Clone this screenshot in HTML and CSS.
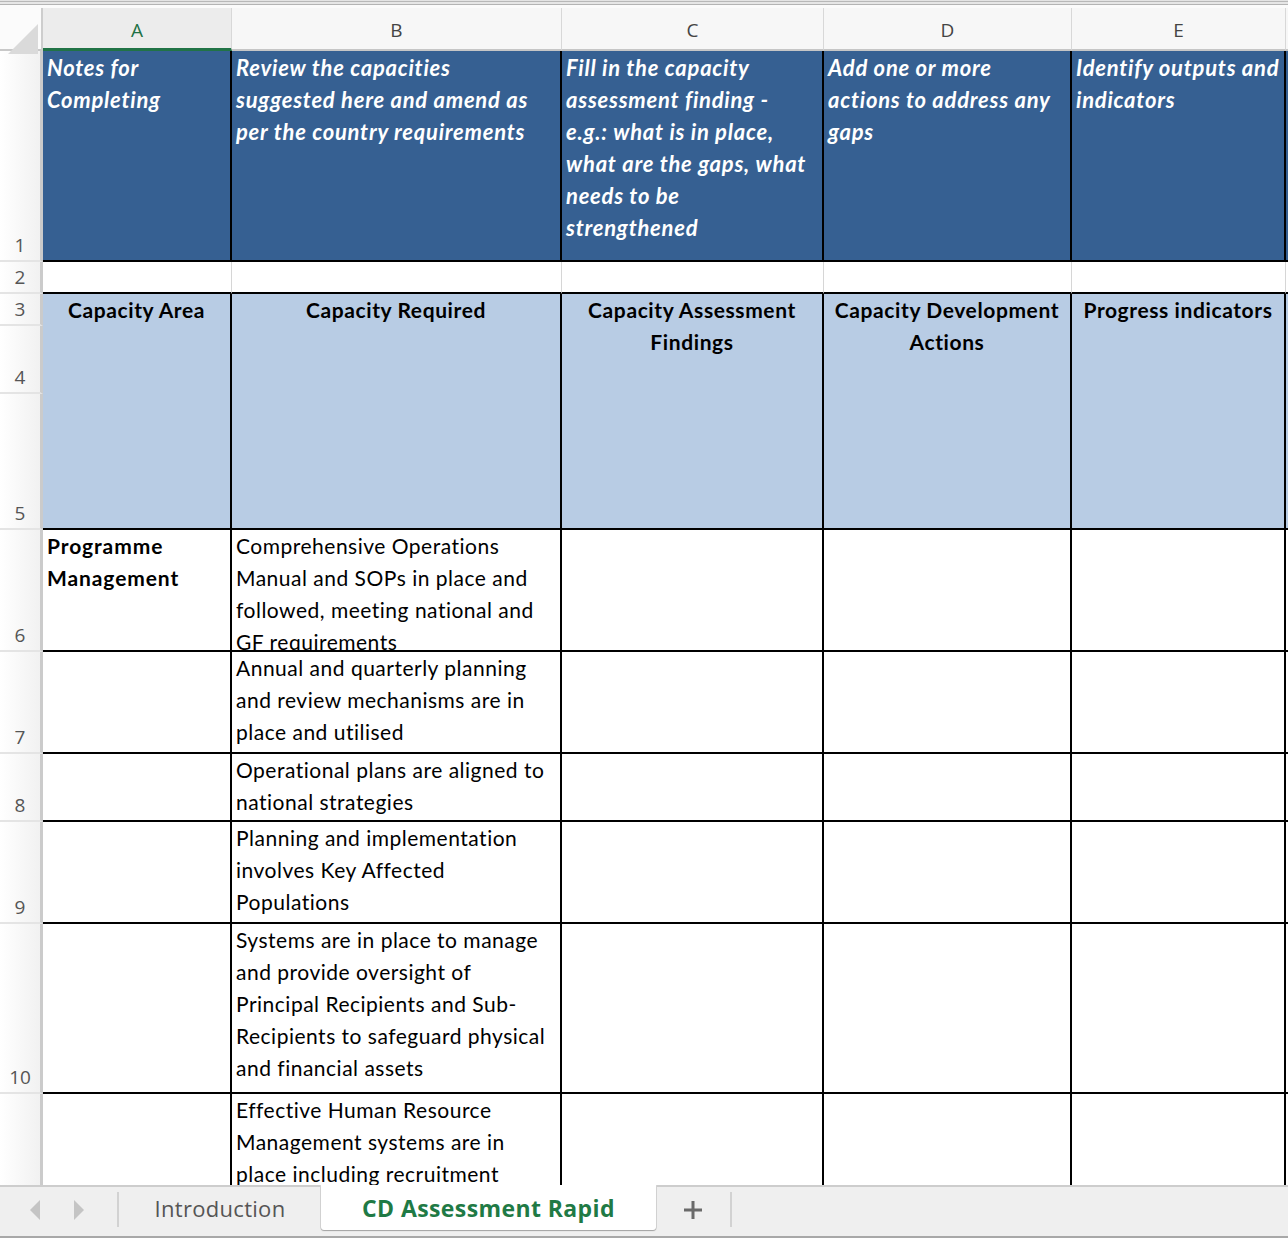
FILE: index.html
```html
<!DOCTYPE html>
<html>
<head>
<meta charset="utf-8">
<link rel="stylesheet" href="styles.css">
</head>
<body>
<div class="app">
  <div class="topbar"></div>
  <div class="sheet">
    <!-- column headers -->
    <div class="corner"><span class="tri"></span></div>
    <div class="ch ch-sel">A</div>
    <div class="ch">B</div>
    <div class="ch">C</div>
    <div class="ch">D</div>
    <div class="ch">E</div>
    <div class="ch ch-last"></div>

    <!-- row 1 -->
    <div class="rh"><span>1</span></div>
    <div class="c dark">Notes for<br>Completing</div>
    <div class="c dark">Review the capacities<br>suggested here and amend as<br>per the country requirements</div>
    <div class="c dark">Fill in the capacity<br>assessment finding -<br>e.g.: what is in place,<br>what are the gaps, what<br>needs to be<br>strengthened</div>
    <div class="c dark">Add one or more<br>actions to address any<br>gaps</div>
    <div class="c dark">Identify outputs and<br>indicators</div>
    <div class="c dark last"></div>

    <!-- row 2 -->
    <div class="rh"><span>2</span></div>
    <div class="c blank"></div>
    <div class="c blank"></div>
    <div class="c blank"></div>
    <div class="c blank"></div>
    <div class="c blank"></div>
    <div class="c blank last"></div>

    <!-- rows 3-5 -->
    <div class="rh"><span>3</span></div>
    <div class="c light span3">Capacity Area</div>
    <div class="c light span3">Capacity Required</div>
    <div class="c light span3">Capacity Assessment<br>Findings</div>
    <div class="c light span3">Capacity Development<br>Actions</div>
    <div class="c light span3">Progress indicators</div>
    <div class="c light span3 last"></div>
    <div class="rh"><span>4</span></div>
    <div class="rh"><span>5</span></div>

    <!-- row 6 -->
    <div class="rh"><span>6</span></div>
    <div class="c bold">Programme<br>Management</div>
    <div class="c">Comprehensive Operations<br>Manual and SOPs in place and<br>followed, meeting national and<br>GF requirements</div>
    <div class="c"></div>
    <div class="c"></div>
    <div class="c"></div>
    <div class="c last"></div>

    <!-- row 7 -->
    <div class="rh"><span>7</span></div>
    <div class="c"></div>
    <div class="c">Annual and quarterly planning<br>and review mechanisms are in<br>place and utilised</div>
    <div class="c"></div>
    <div class="c"></div>
    <div class="c"></div>
    <div class="c last"></div>

    <!-- row 8 -->
    <div class="rh"><span>8</span></div>
    <div class="c"></div>
    <div class="c">Operational plans are aligned to<br>national strategies</div>
    <div class="c"></div>
    <div class="c"></div>
    <div class="c"></div>
    <div class="c last"></div>

    <!-- row 9 -->
    <div class="rh"><span>9</span></div>
    <div class="c"></div>
    <div class="c">Planning and implementation<br>involves Key Affected<br>Populations</div>
    <div class="c"></div>
    <div class="c"></div>
    <div class="c"></div>
    <div class="c last"></div>

    <!-- row 10 -->
    <div class="rh"><span>10</span></div>
    <div class="c"></div>
    <div class="c">Systems are in place to manage<br>and provide oversight of<br>Principal Recipients and Sub-<br>Recipients to safeguard physical<br>and financial assets</div>
    <div class="c"></div>
    <div class="c"></div>
    <div class="c"></div>
    <div class="c last"></div>

    <!-- row 11 -->
    <div class="rh"><span></span></div>
    <div class="c"></div>
    <div class="c">Effective Human Resource<br>Management systems are in<br>place including recruitment</div>
    <div class="c"></div>
    <div class="c"></div>
    <div class="c"></div>
    <div class="c last"></div>
  </div>

  <div class="tabs">
    <div class="nav">
      <svg width="16" height="22" viewBox="0 0 16 22" class="arrow"><path d="M13 1 L3 11 L13 21 Z" fill="#c4c4c4"/></svg>
      <svg width="16" height="22" viewBox="0 0 16 22" class="arrow"><path d="M3 1 L13 11 L3 21 Z" fill="#c4c4c4"/></svg>
    </div>
    <div class="tab">Introduction</div>
    <div class="tab active">CD Assessment Rapid</div>
    <div class="add">
      <svg width="20" height="20" viewBox="0 0 20 20"><path d="M10 1 V19 M1 10 H19" stroke="#6a6a6a" stroke-width="3"/></svg>
    </div>
    <div class="tabrest"></div>
  </div>
</div>
</body>
</html>
```
FILE: styles.css
```css
html, body {
  margin: 0;
  padding: 0;
  background: #ffffff;
}
.app {
  width: 1288px;
  height: 1238px;
  overflow: hidden;
  display: flex;
  flex-direction: column;
}
.topbar {
  height: 8px;
  flex: none;
  box-sizing: border-box;
  background: #f6f6f6;
  border-top: 1px solid #e4e4e4;
  border-bottom: 3px solid #fbfbfb;
  box-shadow: inset 0 1px 0 #b8b8b8, inset 0 3px 0 #e6e6e6, inset 0 4px 0 #b4b4b4;
}
.sheet {
  height: 1177px;
  flex: none;
  overflow: hidden;
  display: grid;
  grid-template-columns: 43px 189px 330px 262px 248px 214px 1fr;
  grid-template-rows: 43px 211px 32px 32px 68px 136px 122px 102px 68px 102px 170px 120px;
  font-family: "Lato", "Open Sans", sans-serif;
  font-size: 21px;
  line-height: 32px;
  letter-spacing: 0.5px;
  color: #000;
}
.corner {
  position: relative;
  box-sizing: border-box;
  background: #fbfbfb;
  border-right: 2px solid #cdcdcd;
  border-bottom: 2px solid #c8c8c8;
}
.tri {
  position: absolute;
  left: 8px;
  top: 16px;
  width: 0;
  height: 0;
  border-left: 30px solid transparent;
  border-bottom: 30px solid #dadada;
}
.ch {
  box-sizing: border-box;
  background: #f7f7f7;
  border-right: 1px solid #d8d8d8;
  border-bottom: 2px solid #c6c6c6;
  text-align: center;
  font-family: "Open Sans", "Liberation Sans", sans-serif;
  font-size: 19px;
  line-height: 44px;
  letter-spacing: 0;
  color: #444;
}
.ch-sel {
  background: #ececec;
  color: #1e7145;
  border-bottom: 3px solid #217346;
}
.ch-last {
  border-right: none;
}
.rh {
  grid-column: 1;
  box-sizing: border-box;
  background: linear-gradient(to right, #ffffff, #f1f1f1);
  border-right: 3px solid #cbcbcb;
  border-bottom: 2px solid #e4e4e4;
  display: flex;
  align-items: flex-end;
  justify-content: center;
  padding-bottom: 1px;
  font-family: "Open Sans", "Liberation Sans", sans-serif;
  font-size: 19px;
  line-height: 28px;
  letter-spacing: 0;
  color: #555;
}
.c {
  box-sizing: border-box;
  border-right: 2px solid #000;
  border-bottom: 2px solid #000;
  padding: 0 4px;
  white-space: nowrap;
  overflow: hidden;
}
.c.last {
  border-right: none;
}
.dark {
  background: #366092;
  color: #ffffff;
  font-weight: 700;
  font-style: italic;
  font-size: 22px;
  letter-spacing: 0.75px;
  padding-top: 1px;
}
.blank {
  border-right: 1px solid #d6d6d6;
}
.light {
  background: #b8cce4;
  font-weight: 700;
  letter-spacing: 0.6px;
  text-align: center;
}
.span3 {
  grid-row: span 3;
}
.bold {
  font-weight: 700;
  letter-spacing: 0.9px;
}
.tabs {
  flex: 1;
  display: flex;
  align-items: stretch;
  box-sizing: border-box;
  background: #efefef;
  border-top: 2px solid #cdcdcd;
  border-bottom: 2px solid #a8a8a8;
  font-family: "Open Sans", "Liberation Sans", sans-serif;
  font-size: 22px;
}
.nav {
  width: 119px;
  box-sizing: border-box;
  display: flex;
  align-items: center;
  gap: 28px;
  padding-left: 27px;
  border-right: 2px solid #d2d2d2;
  margin: 5px 0 9px;
}
.tab {
  display: flex;
  align-items: center;
  justify-content: center;
  width: 202px;
  color: #555;
  margin-bottom: 7px;
  letter-spacing: 0.3px;
}
.tab.active {
  width: 335px;
  background: #ffffff;
  color: #1f7a45;
  font-weight: 700;
  font-size: 23px;
  letter-spacing: 0.4px;
  margin-top: -2px;
  margin-bottom: 6px;
  border-radius: 0 0 3px 3px;
  box-shadow: 0 1px 1px #a0a0a0, 1px 0 0 #d6d6d6, -1px 0 0 #d6d6d6;
}
.add {
  width: 76px;
  display: flex;
  align-items: center;
  justify-content: center;
  box-sizing: border-box;
  border-right: 2px solid #d2d2d2;
  margin: 5px 0 9px;
}
.tabrest {
  flex: 1;
}
```
